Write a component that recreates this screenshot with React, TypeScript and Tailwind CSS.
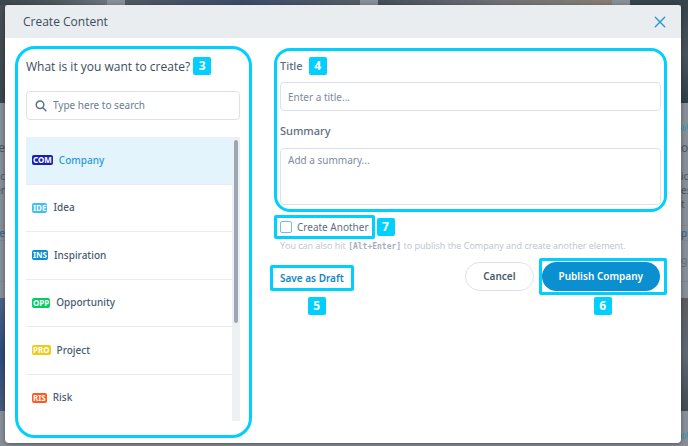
import { useState } from "react";
import clsx from "clsx";

const TYPES = [
  { code: "COM", name: "Company", color: "bg-[#1a1fb0]" },
  { code: "IDE", name: "Idea", color: "bg-[#41c0f0]" },
  { code: "INS", name: "Inspiration", color: "bg-[#0a8fd0]" },
  { code: "OPP", name: "Opportunity", color: "bg-[#06cc66]" },
  { code: "PRO", name: "Project", color: "bg-[#f0cc18]" },
  { code: "RIS", name: "Risk", color: "bg-[#ff5a1c]" },
];

function Marker({ children }: { children: React.ReactNode }) {
  return (
    <span className="flex h-[18px] w-[18px] shrink-0 items-center justify-center rounded-xs bg-[#00cfff] text-xs font-bold text-white">
      {children}
    </span>
  );
}

function SearchIcon() {
  return (
    <svg viewBox="0 0 12 12" className="h-3 w-3 shrink-0" fill="none" stroke="#5f7288" strokeWidth="1.5" strokeLinecap="round">
      <circle cx="5" cy="4.8" r="3.8" />
      <path d="M7.9 7.7l3 3" />
    </svg>
  );
}

function CloseIcon() {
  return (
    <svg viewBox="0 0 12 12" className="h-3 w-3" fill="none" stroke="#2b98d6" strokeWidth="1.4" strokeLinecap="round">
      <path d="M1.3 1.3l9.4 9.4M10.7 1.3L1.3 10.7" />
    </svg>
  );
}

function PageBehind() {
  return (
    <div className="absolute inset-0 overflow-hidden bg-[#878e98] text-[#4c5764]" aria-hidden="true">
      <div className="flex h-[5px] gap-[18px]">
        <div className="w-[107px] bg-linear-to-r from-[#3c464c] via-[#4c555a] to-[#6c747d]" />
        <div className="flex-1 bg-linear-to-r from-[#50585f] via-[#3c4a68] to-[#555d64]" />
        <div className="flex-1 bg-linear-to-r from-[#454e58] via-[#6e6f76] to-[#857e70]" />
        <div className="w-[58px] bg-[#36434b]" />
      </div>
      <div className="flex justify-between text-[10px] leading-[14px]">
        <div className="flex w-[5px] flex-col items-end overflow-hidden">
          <div className="h-[98px] w-full bg-linear-to-b from-[#464f54] to-[#3b454b]" />
          <div className="mt-[38px] text-xs leading-[14px]">e</div>
          <div className="mt-[14px]">c</div>
          <div>er</div>
          <div className="mt-[28px] flex w-full justify-end border-y border-[#7d8691] text-[#33618a]">e</div>
          <div className="mt-[40px] w-full border-t border-[#7d8691]" />
          <div className="mt-[16px] h-[113px] w-full bg-linear-to-b from-[#4d6282] via-[#2c4a7c] to-[#485a78]" />
        </div>
        <div className="flex w-[7px] flex-col overflow-hidden">
          <div className="h-[98px] bg-linear-to-b from-[#36434b] via-[#4a535b] to-[#303d45]" />
          <svg viewBox="0 0 7 8" className="mt-[21px] h-2 w-[7px]" fill="none" stroke="#3d97a5">
            <path d="M0.5 2v4M2.5 1v6M4.5 2v5M6.5 0v5" />
          </svg>
          <div className="mt-[9px] text-xs leading-[14px]">of</div>
          <div className="mt-[14px]">ic</div>
          <div>es</div>
          <div>t</div>
          <div className="mt-[14px] border-y border-[#7d8691] text-[#33618a]">ph</div>
          <div className="mt-[12px] text-[#66707d]">g</div>
          <div className="mt-[14px] border-t border-[#7d8691]" />
          <div className="mt-[16px] h-[113px] bg-linear-to-b from-[#5c5c60] via-[#5f6771] to-[#444a50]" />
          <svg viewBox="0 0 7 8" className="mt-[21px] h-2 w-[7px]" fill="none" stroke="#3d97a5">
            <path d="M0.5 2v4M2.5 1v6M4.5 2v5M6.5 0v5" />
          </svg>
        </div>
      </div>
    </div>
  );
}

export default function App() {
  const [selected, setSelected] = useState("COM");
  const current = TYPES.find((t) => t.code === selected) ?? TYPES[0];

  return (
    <div className="relative min-h-screen pt-[5px] pr-[7px] pb-1 pl-[5px] font-['Noto_Sans',sans-serif] text-[#4a5b70]">
      <PageBehind />
      <div role="dialog" aria-labelledby="dialog-title" className="relative overflow-hidden rounded bg-white shadow-[0_1px_4px_rgba(0,0,0,0.4)]">
        <header className="flex h-[33px] items-center justify-between bg-[#e9edf0] pr-[15px] pl-[18px]">
          <h1 id="dialog-title" className="font-['Open_Sans',sans-serif] text-xs font-medium text-[#3c4c60]">
            Create Content
          </h1>
          <button type="button" aria-label="Close">
            <CloseIcon />
          </button>
        </header>

        <div className="flex items-start gap-[18px] pt-2 pr-[14px] pb-[5px] pl-[10px]">
          <section className="w-[237px] shrink-0 rounded-[20px] border-3 border-[#00cfff] pt-2 pr-[9px] pb-[14px] pl-2">
            <div className="flex items-end gap-[3px]">
              <h2 className="font-['Open_Sans',sans-serif] text-xs font-medium text-[#3c4c60]">What is it you want to create?</h2>
              <Marker>3</Marker>
            </div>
            <label className="mt-4 flex h-[29px] items-center gap-1.5 rounded border border-[#dde2ea] px-2">
              <SearchIcon />
              <input
                type="search"
                aria-label="Search types"
                placeholder="Type here to search"
                className="min-w-0 flex-1 text-[10px] outline-none placeholder:text-[#6b7d92]"
              />
            </label>
            <div className="mt-[17px] flex h-[284px]">
              <ul className="flex flex-1 flex-col">
                {TYPES.map((type) => (
                  <li key={type.code} className="flex-1 border-b border-[#e9edf1] last:border-b-0">
                    <button
                      type="button"
                      onClick={() => setSelected(type.code)}
                      className={clsx(
                        "flex h-full w-full items-center gap-1.5 pl-1.5 text-[10px] font-medium",
                        type.code === selected && "bg-[#e3f4fd] text-[#2b9bcf]",
                      )}
                    >
                      <span className={clsx("rounded-xs px-px text-[8px] leading-[10px] font-bold text-white", type.color)}>{type.code}</span>
                      {type.name}
                    </button>
                  </li>
                ))}
              </ul>
              <div className="w-2 bg-[#edf1f4] px-[2px] pt-[3px]">
                <div className="h-[183px] rounded-full bg-[#9ba8b3]" />
              </div>
            </div>
          </section>

          <form className="min-w-0 flex-1 pt-0.5" onSubmit={(e) => e.preventDefault()}>
            <div className="ml-1 rounded-2xl border-3 border-[#00cfff] px-[3px] pt-1.5 pb-1">
              <div className="flex h-[18px] items-center gap-1.5">
                <label htmlFor="title" className="text-[11px] font-medium text-[#5d6e84]">
                  Title
                </label>
                <Marker>4</Marker>
              </div>
              <input
                id="title"
                placeholder="Enter a title..."
                className="mt-[7px] block h-[29px] w-full rounded border border-[#dde2ea] px-[7px] text-[10px] outline-none placeholder:text-[#7b8b9f]"
              />
              <label htmlFor="summary" className="mt-[11px] block text-[11px] leading-[18px] font-medium text-[#5d6e84]">
                Summary
              </label>
              <textarea
                id="summary"
                placeholder="Add a summary..."
                className="mt-2 block h-[57px] w-full resize-none rounded border border-[#dde2ea] px-[7px] py-[3px] text-[10px] leading-4 outline-none placeholder:text-[#7b8b9f]"
              />
            </div>

            <div className="mt-[3px] ml-1 flex items-center gap-[2px]">
              <label className="flex h-6 items-center gap-[5px] rounded-xs border-3 border-[#00cfff] px-[3px] text-[10px] text-[#5d6e84]">
                <input type="checkbox" className="h-3 w-3 appearance-none rounded-xs border border-[#74bbe2] checked:bg-[#0a8fd0]" />
                Create Another
              </label>
              <Marker>7</Marker>
            </div>

            <p className="ml-[10px] font-['Open_Sans',sans-serif] text-[9px] leading-[14px] text-[#bcc3cd]">
              You can also hit <kbd className="font-['DejaVu_Sans_Mono',monospace] text-[8px] font-bold text-[#a6afbc]">[Alt+Enter]</kbd> to publish the{" "}
              {current.name} and create another element.
            </p>

            <div className="mt-1 flex items-start">
              <div className="mt-[7px] flex flex-col items-end gap-[6px]">
                <div className="rounded-xs border-3 border-[#00cfff] px-[7px]">
                  <button type="button" className="block h-5 text-[10px] font-semibold text-[#1486c4]">
                    Save as Draft
                  </button>
                </div>
                <div className="pr-7">
                  <Marker>5</Marker>
                </div>
              </div>
              <button type="button" className="mt-1 mr-[5px] ml-auto h-[29px] rounded-full border border-[#dde2ea] px-[17px] text-[10px] font-semibold">
                Cancel
              </button>
              <div className="flex flex-col items-center gap-[2px]">
                <div className="rounded-xs border-3 border-[#00cfff] py-[1px] pr-1">
                  <button type="submit" className="block h-[29px] rounded-full bg-[#0a8fd0] px-[17px] text-[10px] font-semibold text-white">
                    Publish {current.name}
                  </button>
                </div>
                <Marker>6</Marker>
              </div>
            </div>
          </form>
        </div>
      </div>
    </div>
  );
}
